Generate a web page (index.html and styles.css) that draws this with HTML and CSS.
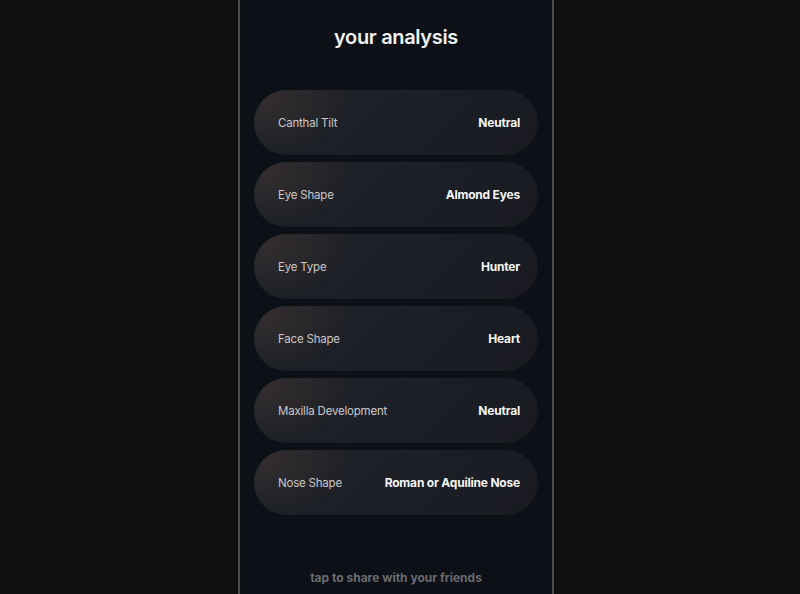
FILE: index.html
```html
<!DOCTYPE html>
<html lang="en">
<head>
    <meta charset="UTF-8">
    <meta name="viewport" content="width=device-width, initial-scale=1.0">
    <title>Your Analysis</title>
    <link rel="stylesheet" href="styles.css">
</head>
<body>
    <div class="stage">
        <div class="phone">
            <h2 class="title">your analysis</h2>

            <div class="results">
                <div class="result">
                    <span class="label">Canthal Tilt</span>
                    <span class="value">Neutral</span>
                </div>
                <div class="result">
                    <span class="label">Eye Shape</span>
                    <span class="value">Almond Eyes</span>
                </div>
                <div class="result">
                    <span class="label">Eye Type</span>
                    <span class="value">Hunter</span>
                </div>
                <div class="result">
                    <span class="label">Face Shape</span>
                    <span class="value">Heart</span>
                </div>
                <div class="result">
                    <span class="label">Maxilla Development</span>
                    <span class="value">Neutral</span>
                </div>
                <div class="result">
                    <span class="label">Nose Shape</span>
                    <span class="value">Roman or Aquiline Nose</span>
                </div>
            </div>

            <p class="share">tap to share with your friends</p>
        </div>
    </div>
</body>
</html>
```

FILE: styles.css
```css
body {
    margin: 0;
    background-color: #101010;
    font-family: Inter, "Noto Sans", sans-serif;
    overflow: hidden;
}
.stage {
    height: 594px;
    padding-left: 238px;
    display: flex;
}
.phone {
    width: 312px;
    height: 594px;
    background-color: #0d1016;
    border-left: 2px solid #4b4c50;
    border-right: 2px solid #4b4c50;
    display: flex;
    flex-direction: column;
    align-items: center;
}
.title {
    margin: 24px 0 0;
    font-size: 20px;
    line-height: 26px;
    font-weight: 600;
    color: #f2f2f2;
    letter-spacing: -0.35px;
}
.results {
    margin-top: 40px;
    width: 284px;
    display: flex;
    flex-direction: column;
    gap: 7px;
}
.result {
    height: 65px;
    border-radius: 33px;
    padding: 0 18px 0 24px;
    display: flex;
    align-items: center;
    justify-content: space-between;
    background:
        radial-gradient(ellipse 90px 60px at 4% 8%, rgba(95, 72, 58, 0.35), rgba(95, 72, 58, 0) 100%),
        linear-gradient(135deg, #1e2128 0%, #1c1f26 50%, #181a20 100%);
}
.label {
    font-size: 11.5px;
    letter-spacing: -0.2px;
    color: #c9c9cb;
}
.value {
    font-size: 12px;
    letter-spacing: -0.2px;
    color: #f5f5f5;
    font-weight: 700;
}
.share {
    margin: auto 0 9px;
    font-size: 12px;
    font-weight: 700;
    color: #6a6c71;
}
```
